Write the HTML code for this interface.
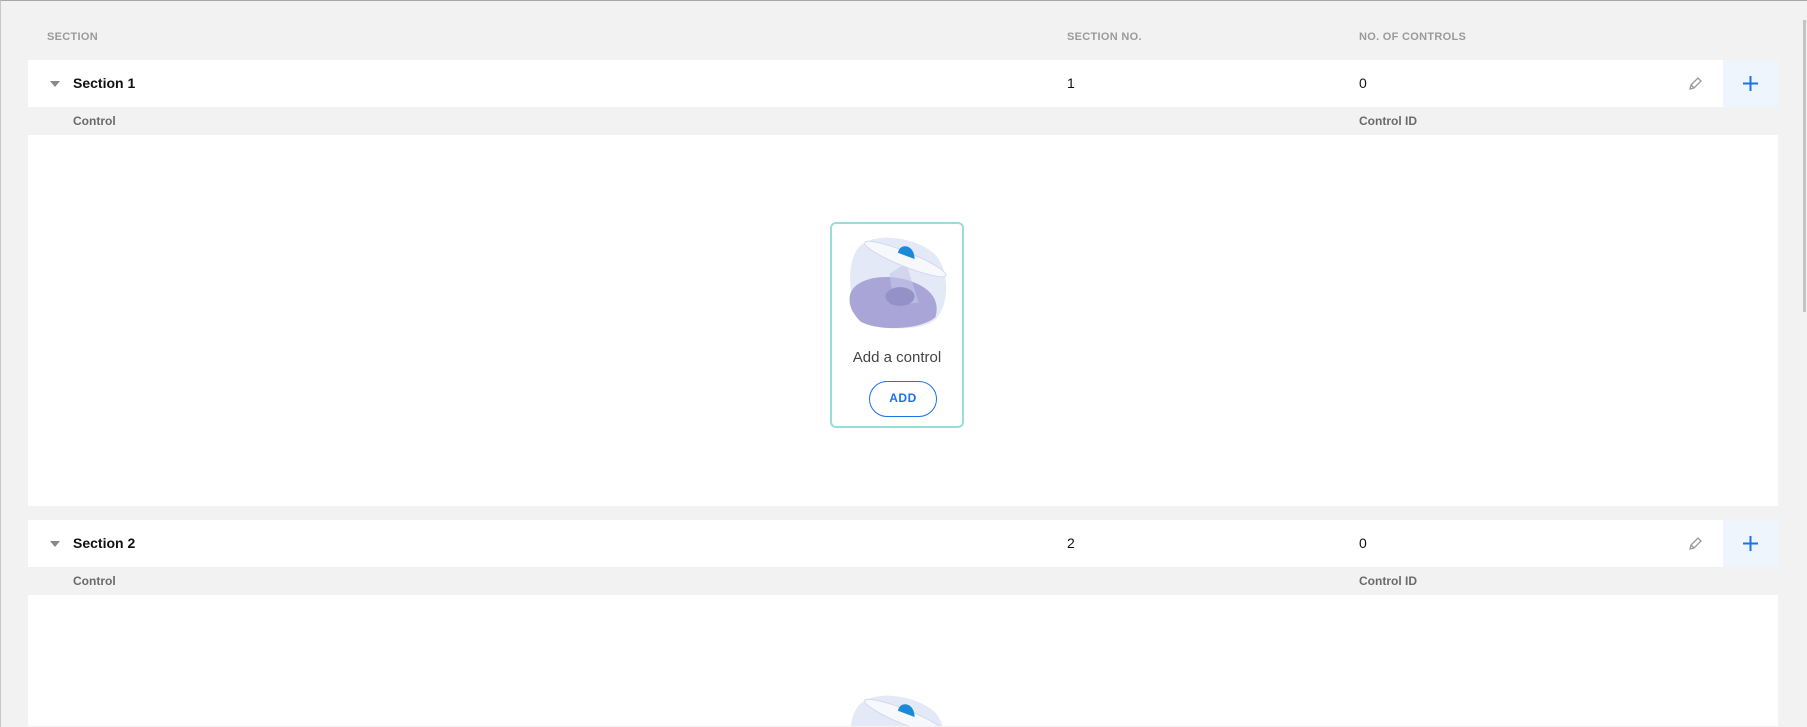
<!DOCTYPE html>
<html><head><meta charset="utf-8"><style>
*{margin:0;padding:0;box-sizing:border-box}
html,body{width:1807px;height:727px;overflow:hidden}
body{background:#f2f2f2;font-family:"Liberation Sans",sans-serif;position:relative}
.frame{position:absolute;left:0;top:0;width:100%;height:100%;border-top:1px solid #a8a8a8;border-left:1px solid #c8c8c8;z-index:5;pointer-events:none}
.sb{position:absolute;left:1803px;top:20px;width:3px;height:292px;background:#c4c4c4}
.hdr{position:absolute;top:31px;font-size:11px;font-weight:bold;color:#9a9a9a;letter-spacing:.3px}
.row{position:absolute;left:28px;width:1750px;height:47px;background:#fff}
.row .tri{position:absolute;left:22px;top:21px;width:0;height:0;border-left:5px solid transparent;border-right:5px solid transparent;border-top:6px solid #888}
.row .t{position:absolute;top:15px;font-size:14px;color:#111}
.row .b{font-weight:bold}
.plus{position:absolute;right:0;top:0;width:55px;height:47px;background:#eef5fd}
.sub{position:absolute;left:28px;width:1750px;height:28px;background:#f2f2f2}
.sub span{position:absolute;top:7px;font-size:12px;font-weight:bold;color:#6a6a6a}
.body{position:absolute;left:28px;width:1750px;background:#fff;overflow:hidden}
.card{position:absolute;left:802px;top:87px;width:134px;height:206px;border:2px solid #9adcd8;border-radius:6px;background:#fff}
.card .lbl{position:absolute;top:125px;width:100%;text-align:center;font-size:15px;color:#444}
.card .btn{position:absolute;left:37px;top:157px;width:68px;height:36px;border:1.5px solid #1a73e8;border-radius:18px;color:#1a73e8;font-size:12px;font-weight:bold;text-align:center;line-height:33px;letter-spacing:.5px}
</style></head><body>
<div class="frame"></div>
<div class="sb"></div>
<div class="hdr" style="left:47px">SECTION</div>
<div class="hdr" style="left:1067px">SECTION NO.</div>
<div class="hdr" style="left:1359px">NO. OF CONTROLS</div>

<div class="row" style="top:60px">
 <div class="tri"></div>
 <div class="t b" style="left:45px">Section 1</div>
 <div class="t" style="left:1039px">1</div>
 <div class="t" style="left:1331px">0</div>
 <svg style="position:absolute;left:1659px;top:16px" width="16" height="16" viewBox="0 0 16 16"><path d="M3 13l1-4 7-7 3 3-7 7z M4 9l3 3" fill="none" stroke="#999" stroke-width="1.3"/></svg>
 <div class="plus"><svg style="position:absolute;left:20px;top:16px" width="15" height="15"><path d="M7.5 0v15M0 7.5h15" stroke="#1a73e8" stroke-width="2"/></svg></div>
</div>
<div class="sub" style="top:107px"><span style="left:45px">Control</span><span style="left:1331px">Control ID</span></div>
<div class="body" style="top:135px;height:371px">
 <div class="card">
  <svg style="position:absolute;left:16px;top:8px" width="104" height="104" viewBox="0 0 100 100">
   <path d="M8 18 C18 0 60 2 82 20 C100 36 98 80 78 88 C58 96 22 95 8 75 C0 55 0 32 8 18z" fill="#e3e9f6"/>
   <path d="M2 60 C6 46 30 40 52 45 C74 50 90 62 84 82 C70 94 30 96 12 86 C4 78 0 70 2 60z" fill="#a9a5d6"/>
   <path d="M40 40 L56 30 L68 68 L44 70z" fill="#c4c8e8" opacity=".6"/>
   <ellipse cx="50" cy="62" rx="14" ry="9" fill="#9490c8"/>
   <ellipse cx="55" cy="26" rx="42" ry="7" transform="rotate(22 55 26)" fill="#f6f8fc" stroke="#d3daee"/>
   <path d="M48 20 C50 10 64 12 64 26z" fill="#1a8ad8"/>
  </svg>
  <div class="lbl">Add a control</div>
  <div class="btn">ADD</div>
 </div>
</div>

<div class="row" style="top:520px">
 <div class="tri"></div>
 <div class="t b" style="left:45px">Section 2</div>
 <div class="t" style="left:1039px">2</div>
 <div class="t" style="left:1331px">0</div>
 <svg style="position:absolute;left:1659px;top:16px" width="16" height="16" viewBox="0 0 16 16"><path d="M3 13l1-4 7-7 3 3-7 7z M4 9l3 3" fill="none" stroke="#999" stroke-width="1.3"/></svg>
 <div class="plus"><svg style="position:absolute;left:20px;top:16px" width="15" height="15"><path d="M7.5 0v15M0 7.5h15" stroke="#1a73e8" stroke-width="2"/></svg></div>
</div>
<div class="sub" style="top:567px"><span style="left:45px">Control</span><span style="left:1331px">Control ID</span></div>
<div class="body" style="top:595px;height:131px">
 <svg style="position:absolute;left:820px;top:95px" width="104" height="36" viewBox="0 0 100 34.6">
   <path d="M8 18 C18 0 60 2 82 20 C100 36 98 80 78 88 C58 96 22 95 8 75 C0 55 0 32 8 18z" fill="#e3e9f6"/>
   <ellipse cx="55" cy="26" rx="42" ry="7" transform="rotate(22 55 26)" fill="#f6f8fc" stroke="#d3daee"/>
   <path d="M48 20 C50 10 64 12 64 26z" fill="#1a8ad8"/>
 </svg>
</div>
</body></html>
